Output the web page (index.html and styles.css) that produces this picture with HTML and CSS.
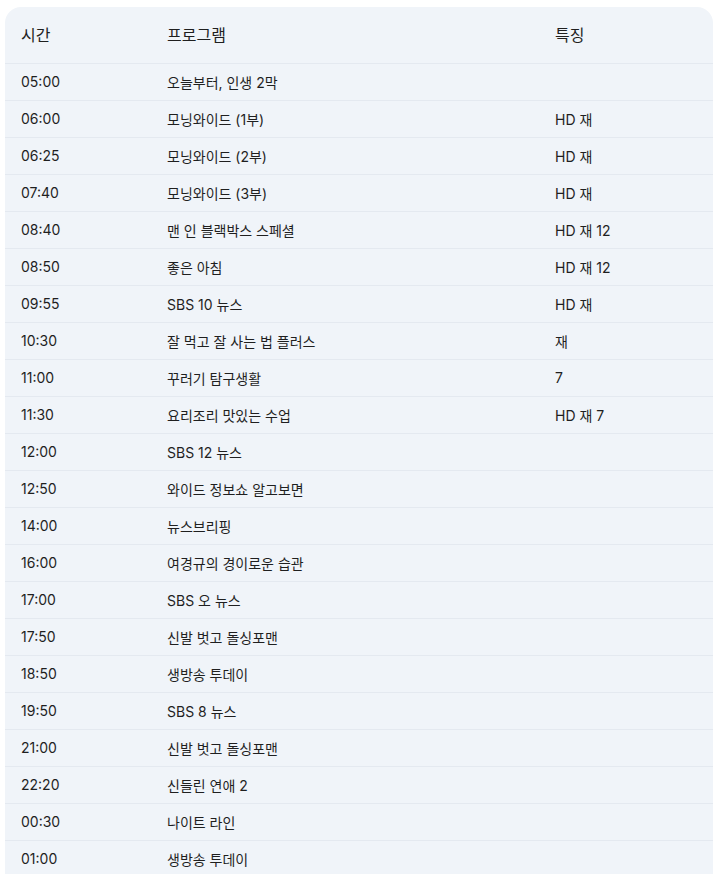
FILE: index.html
```html
<!DOCTYPE html>
<html lang="ko">
<head>
<meta charset="utf-8">
<link rel="stylesheet" href="styles.css">
</head>
<body>
<div class="wrap">
  <table class="schedule">
    <colgroup>
      <col class="c-time">
      <col class="c-prog">
      <col class="c-feat">
    </colgroup>
    <thead>
      <tr><th>시간</th><th>프로그램</th><th>특징</th></tr>
    </thead>
    <tbody>
      <tr><td>05:00</td><td>오늘부터, 인생 2막</td><td></td></tr>
      <tr><td>06:00</td><td>모닝와이드 (1부)</td><td>HD 재</td></tr>
      <tr><td>06:25</td><td>모닝와이드 (2부)</td><td>HD 재</td></tr>
      <tr><td>07:40</td><td>모닝와이드 (3부)</td><td>HD 재</td></tr>
      <tr><td>08:40</td><td>맨 인 블랙박스 스페셜</td><td>HD 재 12</td></tr>
      <tr><td>08:50</td><td>좋은 아침</td><td>HD 재 12</td></tr>
      <tr><td>09:55</td><td>SBS 10 뉴스</td><td>HD 재</td></tr>
      <tr><td>10:30</td><td>잘 먹고 잘 사는 법 플러스</td><td>재</td></tr>
      <tr><td>11:00</td><td>꾸러기 탐구생활</td><td>7</td></tr>
      <tr><td>11:30</td><td>요리조리 맛있는 수업</td><td>HD 재 7</td></tr>
      <tr><td>12:00</td><td>SBS 12 뉴스</td><td></td></tr>
      <tr><td>12:50</td><td>와이드 정보쇼 알고보면</td><td></td></tr>
      <tr><td>14:00</td><td>뉴스브리핑</td><td></td></tr>
      <tr><td>16:00</td><td>여경규의 경이로운 습관</td><td></td></tr>
      <tr><td>17:00</td><td>SBS 오 뉴스</td><td></td></tr>
      <tr><td>17:50</td><td>신발 벗고 돌싱포맨</td><td></td></tr>
      <tr><td>18:50</td><td>생방송 투데이</td><td></td></tr>
      <tr><td>19:50</td><td>SBS 8 뉴스</td><td></td></tr>
      <tr><td>21:00</td><td>신발 벗고 돌싱포맨</td><td></td></tr>
      <tr><td>22:20</td><td>신들린 연애 2</td><td></td></tr>
      <tr><td>00:30</td><td>나이트 라인</td><td></td></tr>
      <tr><td>01:00</td><td>생방송 투데이</td><td></td></tr>
    </tbody>
  </table>
</div>
</body>
</html>
```
FILE: styles.css
```css
html, body {
  margin: 0;
  padding: 0;
  background: #ffffff;
}
body {
  font-family: Inter, "Noto Sans CJK KR", sans-serif;
  color: #1f1f1f;
}
.wrap {
  padding: 7px 6px 0 5px;
}
.schedule {
  width: 708px;
  border-collapse: separate;
  border-spacing: 0;
  background: #f0f4f9;
  border-radius: 16px 16px 0 0;
  table-layout: fixed;
}
.c-time { width: 146px; }
.c-prog { width: 388px; }
.c-feat { width: 174px; }
.schedule th {
  height: 53px;
  padding: 0 16px 3px;
  text-align: left;
  font-weight: 400;
  font-size: 16px;
  vertical-align: middle;
}
.schedule td {
  height: 35px;
  padding: 0 16px 1px;
  border-top: 1px solid #e4e9f0;
  font-size: 14px;
  vertical-align: middle;
  white-space: nowrap;
}
```
